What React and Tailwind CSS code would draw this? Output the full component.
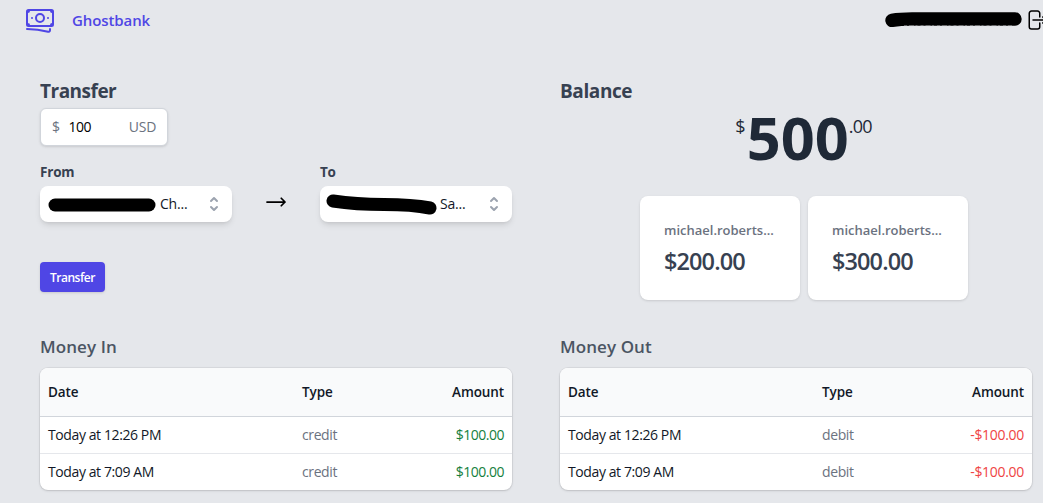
import React from 'react';

const BANKNOTES =
  'M2.25 18.75a60.07 60.07 0 0115.797 2.101c.727.198 1.453-.342 1.453-1.096V18.75M3.75 4.5v.75A.75.75 0 013 6h-.75m0 0v-.375c0-.621.504-1.125 1.125-1.125H20.25M2.25 6v9m18-10.5v.75c0 .414.336.75.75.75h.75m-1.5-1.5h.375c.621 0 1.125.504 1.125 1.125v9.75c0 .621-.504 1.125-1.125 1.125h-.375m1.5-1.5H21a.75.75 0 00-.75.75v.75m0 0H3.75m0 0h-.375a1.125 1.125 0 01-1.125-1.125V15m1.5 1.5v-.75A.75.75 0 003 15h-.75M15 10.5a3 3 0 11-6 0 3 3 0 016 0zm3 0h.008v.008H18V10.5zm-12 0h.008v.008H6V10.5z';
const LOGOUT =
  'M15.75 9V5.25A2.25 2.25 0 0013.5 3h-6a2.25 2.25 0 00-2.25 2.25v13.5A2.25 2.25 0 007.5 21h6a2.25 2.25 0 002.25-2.25V15m3 0l3-3m0 0l-3-3m3 3H9';
const ARROW = 'M17.25 8.25L21 12m0 0l-3.75 3.75M21 12H3';
const CHEVRONS =
  'M10 3a1 1 0 01.707.293l3 3a1 1 0 01-1.414 1.414L10 5.414 7.707 7.707a1 1 0 01-1.414-1.414l3-3A1 1 0 0110 3zm-3.707 9.293a1 1 0 011.414 0L10 14.586l2.293-2.293a1 1 0 011.414 1.414l-3 3a1 1 0 01-1.414 0l-3-3a1 1 0 010-1.414z';

function OutlineIcon({ d, className }) {
  return (
    <svg viewBox="0 0 24 24" fill="none" stroke="currentColor" strokeWidth="1.5" strokeLinecap="round" strokeLinejoin="round" className={className}>
      <path d={d} />
    </svg>
  );
}

function Header() {
  return (
    <header className="flex h-10 items-center pl-6">
      <OutlineIcon d={BANKNOTES} className="size-8 shrink-0 text-[#4f46e5]" />
      <span className="ml-4 text-[15px] font-semibold tracking-[-0.1px] text-[#4f46e5]">Ghostbank</span>
      <svg viewBox="0 0 140 20" className="ml-auto h-5 w-[140px] shrink-0">
        <path d="M8 10.4Q16 9 28 9H131" fill="none" stroke="#000" strokeWidth="13.4" strokeLinecap="round" />
        <path d="M20 15.6H128" stroke="#9c9da0" strokeWidth="0.6" strokeDasharray="3 2 5 1.5 2 3" />
      </svg>
      <OutlineIcon d={LOGOUT} className="-mr-[5px] size-6 shrink-0 text-black" />
    </header>
  );
}

function AccountSelect({ label, suffix, children }) {
  return (
    <div className="w-48">
      <div className="h-6 text-[13.5px] leading-6 font-bold tracking-[-0.2px] text-[#374151]">{label}</div>
      <div className="mt-0.5 flex h-9 items-center rounded-lg bg-white pr-2 pl-1.5 shadow-md">
        <svg viewBox="0 0 112 24" className="h-6 w-28 shrink-0">{children}</svg>
        <span className="ml-0.5 pb-0.5 text-[14px] tracking-[-0.2px] text-[#111827]">{suffix}</span>
        <svg viewBox="0 0 20 20" fill="currentColor" className="ml-auto size-5 text-[#9ca3af]">
          <path fillRule="evenodd" clipRule="evenodd" d={CHEVRONS} />
        </svg>
      </div>
    </div>
  );
}

function Transfer() {
  return (
    <section className="h-[254px]">
      <h2 className="h-7 pt-px text-[19px] leading-7 font-bold tracking-[-0.5px] text-[#374151]">Transfer</h2>
      <div className="mt-1 flex h-[38px] w-32 items-center rounded-md border border-[#d1d5db] bg-white px-[11px] pb-0.5 text-[14px] tracking-[-0.5px] shadow">
        <span className="text-[#6b7280]">$</span>
        <span className="ml-[9px] text-black">100</span>
        <span className="ml-auto tracking-[-0.3px] text-[#6b7280]">USD</span>
      </div>
      <div className="mt-3.5 flex">
        <AccountSelect label="From" suffix="Ch...">
          <path d="M9 13H103" stroke="#000" strokeWidth="13" strokeLinecap="round" />
        </AccountSelect>
        <div className="flex w-22 justify-center pt-[30px]">
          <OutlineIcon d={ARROW} className="size-6 text-black [stroke-width:1.75]" />
        </div>
        <AccountSelect label="To" suffix="Sa...">
          <path d="M7 9Q30 12.5 58 12.5T104 16" fill="none" stroke="#000" strokeWidth="13" strokeLinecap="round" strokeLinejoin="round" />
        </AccountSelect>
      </div>
      <button className="mt-10 h-[30px] w-[65px] rounded bg-[#4f46e5] pt-0.5 text-[12px] font-semibold tracking-[-0.5px] text-white shadow-sm">Transfer</button>
    </section>
  );
}

function BalanceCard({ amount }) {
  return (
    <div className="h-[104px] w-40 rounded-lg bg-white px-6 pt-6 shadow">
      <div className="text-[13px] leading-5 font-semibold whitespace-nowrap text-[#6b7280]">michael.roberts...</div>
      <div className="mt-[3px] text-[23.5px] leading-9 font-semibold tracking-[-0.9px] text-[#374151]">{amount}</div>
    </div>
  );
}

function Balance() {
  return (
    <section className="h-[254px]">
      <h2 className="h-7 pt-px text-[19px] leading-7 font-bold tracking-[-0.4px] text-[#374151]">Balance</h2>
      <div className="flex h-[92px] justify-center pt-[3px] pl-[15px] text-[#1f2937]">
        <span className="mt-[5px] text-[18px] leading-7 tracking-[-1px]">$</span>
        <span className="ml-0.5 text-[59.5px] leading-[60px] font-bold">500</span>
        <span className="mt-[5px] text-[18px] leading-7 tracking-[-0.8px]">.00</span>
      </div>
      <div className="flex justify-center gap-2 pl-4">
        <BalanceCard amount="$200.00" />
        <BalanceCard amount="$300.00" />
      </div>
    </section>
  );
}

function MoneyTable({ title, type, amount, amountClass }) {
  return (
    <section>
      <h3 className="h-[29px] pt-[3px] text-[17px] leading-7 font-semibold tracking-[0.08px] text-[#4b5563]">{title}</h3>
      <div className="mt-[9px] overflow-hidden rounded-lg bg-white text-[14px] shadow ring-1 ring-black/5">
        <div className="flex h-[49px] items-center border-b border-[#d1d5db] bg-[#f9fafb] px-2 text-[13.5px] font-semibold tracking-[-0.1px] text-[#111827]">
          <span className="w-[254px]">Date</span>
          <span>Type</span>
          <span className="ml-auto">Amount</span>
        </div>
        <div className="divide-y divide-[#e5e7eb]">
          {['Today at 12:26 PM', 'Today at 7:09 AM'].map((date) => (
            <div key={date} className="flex h-[37px] items-center px-2 pb-0.5 last:h-9 last:pb-px">
              <span className="w-[254px] tracking-[-0.4px] text-[#111827]">{date}</span>
              <span className="tracking-[-0.4px] text-[#6b7280]">{type}</span>
              <span className={`ml-auto ${amountClass}`}>{amount}</span>
            </div>
          ))}
        </div>
      </div>
    </section>
  );
}

export default function App() {
  return (
    <div className="h-[503px] w-[1043px] overflow-hidden bg-[#e5e7eb] font-['Open_Sans','Noto_Sans',sans-serif]">
      <Header />
      <main className="grid grid-cols-[472px_472px] gap-x-12 pt-9 pl-10">
        <Transfer />
        <Balance />
        <MoneyTable title="Money In" type="credit" amount="$100.00" amountClass="text-[#15803d] tracking-[-0.5px]" />
        <MoneyTable title="Money Out" type="debit" amount="-$100.00" amountClass="text-[#ef4444] tracking-[-0.3px]" />
      </main>
    </div>
  );
}
